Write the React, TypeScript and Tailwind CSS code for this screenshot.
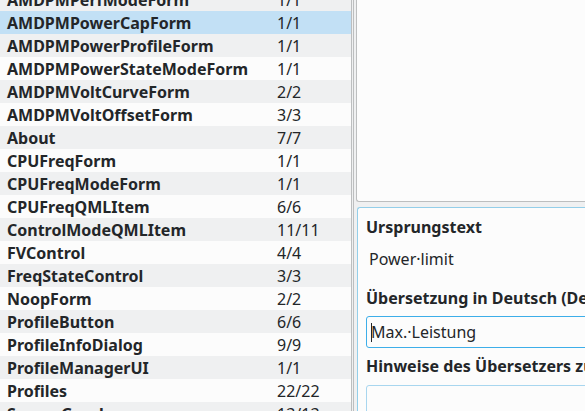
const rows: [string, string][] = [
  ['AMDPMPerfModeForm', '1/1'],
  ['AMDPMPowerCapForm', '1/1'],
  ['AMDPMPowerProfileForm', '1/1'],
  ['AMDPMPowerStateModeForm', '1/1'],
  ['AMDPMVoltCurveForm', '2/2'],
  ['AMDPMVoltOffsetForm', '3/3'],
  ['About', '7/7'],
  ['CPUFreqForm', '1/1'],
  ['CPUFreqModeForm', '1/1'],
  ['CPUFreqQMLItem', '6/6'],
  ['ControlModeQMLItem', '11/11'],
  ['FVControl', '4/4'],
  ['FreqStateControl', '3/3'],
  ['NoopForm', '2/2'],
  ['ProfileButton', '6/6'],
  ['ProfileInfoDialog', '9/9'],
  ['ProfileManagerUI', '1/1'],
  ['Profiles', '22/22'],
  ['SensorGraph', '13/13'],
];

const selected = 1;

function App() {
  return (
    <div className="w-[585px] h-[411px] flex overflow-hidden bg-[#eff0f1] text-[#232629] font-['Noto_Sans',sans-serif] text-[16px]">
      {/* Context list */}
      <div className="w-[352px] shrink-0 overflow-hidden border-r border-[#bcbebf] bg-[#fcfcfc]">
        <div className="-mt-[12px] flex flex-col">
          {rows.map(([name, count], i) => (
            <div
              key={name}
              className={
                'h-[23px] flex items-center pl-[7px] whitespace-nowrap ' +
                (i === selected ? 'bg-[#c2e0f5]' : i % 2 === 0 ? 'bg-[#eff0f1]' : 'bg-[#fcfcfc]')
              }
            >
              <span className="w-[270px] font-bold">{name}</span>
              <span>{count}</span>
            </div>
          ))}
        </div>
      </div>

      {/* Splitter */}
      <div className="w-[4px] shrink-0 pl-[1px]">
        <div className="w-[1px] h-full bg-[#bcbebf]" />
      </div>

      {/* Right side */}
      <div className="flex-1 flex flex-col min-w-0">
        <div className="h-[202px] shrink-0 bg-[#fcfcfc] border-l border-b border-[#bcbebf] rounded-bl-[3px]" />
        <div className="mt-[5px] ml-[1px] flex-1 bg-[#fcfcfc] border-l border-t border-[#93cee9] rounded-tl-[3px] pl-[8px] pt-[8px] whitespace-nowrap">
          <div className="font-bold leading-[22px]">Ursprungstext</div>
          <div className="mt-[10px] pl-[3px] leading-[22px]">Power·limit</div>
          <div className="mt-[17px] font-bold leading-[22px]">Übersetzung in Deutsch (Deutschland)</div>
          <div className="mt-[7px] h-[32px] w-[260px] border border-[#3daee9] rounded-[3px] bg-[#fcfcfc] flex items-center pl-[4px]">
            <span className="w-[1px] h-[19px] bg-[#232629] mr-[-1px]" />
            <span className="leading-[22px]">Max.·Leistung</span>
          </div>
          <div className="mt-[7px] font-bold leading-[22px]">Hinweise des Übersetzers zu diesem Text</div>
          <div className="mt-[8px] h-[60px] w-[260px] border border-[#a8d6ef] rounded-[3px] bg-[#fcfcfc]" />
        </div>
      </div>
    </div>
  );
}

export default App;
